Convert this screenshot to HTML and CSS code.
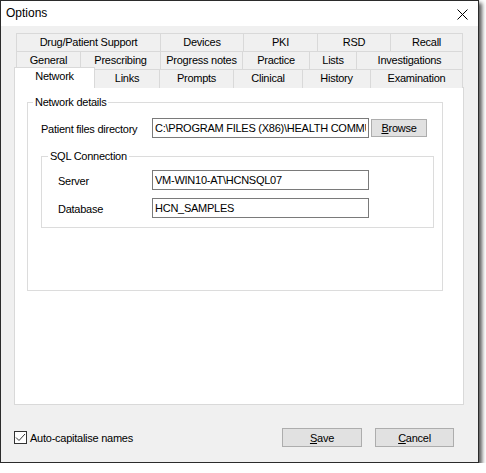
FILE: index.html
```html
<!DOCTYPE html>
<html>
	<head>
		<meta charset="UTF-8">
		<title>Options</title>
		<link rel="stylesheet" href="styles.css">
	</head>
	<body>
		<div class="window">
			<div class="titlebar">
				<span class="title">Options</span>
				<svg class="close" width="11" height="11" viewBox="0 0 11 11">
					<path d="M0.5 0.5 L10.5 10.5 M10.5 0.5 L0.5 10.5" stroke="#000" stroke-width="1" fill="none"/>
				</svg>
			</div>
			<div class="win_body">
				<div class="tabctl">
					<div class="tabrow">
						<div class="tab t_drug">Drug/Patient Support</div>
						<div class="tab t_devices">Devices</div>
						<div class="tab t_pki">PKI</div>
						<div class="tab t_rsd">RSD</div>
						<div class="tab t_recall">Recall</div>
					</div>
					<div class="tabrow">
						<div class="tab t_general">General</div>
						<div class="tab t_prescribing">Prescribing</div>
						<div class="tab t_progress">Progress notes</div>
						<div class="tab t_practice">Practice</div>
						<div class="tab t_lists">Lists</div>
						<div class="tab t_invest">Investigations</div>
					</div>
					<div class="tabrow">
						<div class="tab tab_sel t_network">Network</div>
						<div class="tab t_links">Links</div>
						<div class="tab t_prompts">Prompts</div>
						<div class="tab t_clinical">Clinical</div>
						<div class="tab t_history">History</div>
						<div class="tab t_exam">Examination</div>
					</div>
					<div class="panel">
						<fieldset class="group net_group">
							<legend>Network details</legend>
							<div class="field">
								<label class="lbl_dir">Patient files directory</label>
								<input class="txt" type="text" value="C:\PROGRAM FILES (X86)\HEALTH COMMUNICATION NETWORK\PATIENT FILES">
								<button class="btn btn_browse"><u>B</u>rowse</button>
							</div>
							<fieldset class="group sql_group">
								<legend>SQL Connection</legend>
								<div class="field">
									<label class="lbl_sql">Server</label>
									<input class="txt" type="text" value="VM-WIN10-AT\HCNSQL07">
								</div>
								<div class="field field_gap">
									<label class="lbl_sql">Database</label>
									<input class="txt" type="text" value="HCN_SAMPLES">
								</div>
							</fieldset>
						</fieldset>
					</div>
				</div>
				<div class="footer">
					<span class="check">
						<svg width="11" height="11" viewBox="0 0 11 11">
							<polyline points="1,5.5 4,8.5 10,2" stroke="#333" stroke-width="1" fill="none"/>
						</svg>
					</span>
					<span class="check_lbl">Auto-capitalise names</span>
					<button class="btn btn_save"><u>S</u>ave</button>
					<button class="btn btn_cancel"><u>C</u>ancel</button>
				</div>
			</div>
		</div>
	</body>
</html>
```

FILE: styles.css
```css
html,body{margin: 0; padding: 0; background: #fff;}
body{
	font-family: "Liberation Sans", Arial, sans-serif;
	font-size: 11px;
	letter-spacing: -0.25px;
	color: #000;
}
.window{
	box-sizing: border-box;
	width: 479px;
	height: 463px;
	border: 1px solid #2b2b2b;
	box-shadow: 3px 3px 4px rgba(0,0,0,0.65);
	display: flex;
	flex-direction: column;
}
.titlebar{
	height: 25px;
	background: #fff;
	display: flex;
	align-items: center;
	padding: 0 10px 0 5px;
}
.title{
	font-size: 12px;
	letter-spacing: 0;
	flex: 1;
	margin-top: -1px;
}
.close{
	margin-top: 2px;
}
.win_body{
	flex: 1;
	background: #f0f0f0;
	padding: 7px 0 0 13px;
}

/* tabs */
.tabctl{
	width: 450px;
}
.tabrow{
	display: flex;
	height: 18px;
	padding-left: 2px;
}
.tab{
	box-sizing: border-box;
	height: 19px;
	border: 1px solid #d9d9d9;
	border-bottom: none;
	margin-left: -1px;
	background: #f0f0f0;
	text-align: center;
	line-height: 17px;
	white-space: nowrap;
}
.tabrow .tab:first-child{
	margin-left: 0;
}
.tab_sel{
	position: relative;
	z-index: 1;
	background: #fff;
	height: 21px;
	margin-top: -2px;
	line-height: 17px;
}
.tabrow .tab_sel:first-child{
	margin-left: -2px;
}
.t_drug{width: 145px;}
.t_devices{width: 84px;}
.t_pki{width: 75px;}
.t_rsd{width: 74px;}
.t_recall{width: 73px;}
.t_general{width: 65px;}
.t_prescribing{width: 81px;}
.t_progress{width: 83px;}
.t_practice{width: 68px;}
.t_lists{width: 48px;}
.t_invest{width: 107px;}
.t_network{width: 81px;}
.t_links{width: 66px;}
.t_prompts{width: 75px;}
.t_clinical{width: 70px;}
.t_history{width: 69px;}
.t_exam{width: 93px;}

.panel{
	box-sizing: border-box;
	height: 318px;
	border: 1px solid #d9d9d9;
	background: #fff;
	padding: 8px 20px 0 12px;
}

/* group boxes */
.group{
	box-sizing: border-box;
	margin: 0;
	border: 1px solid #dcdcdc;
	min-width: 0;
}
.group legend{
	padding: 0 2px;
	line-height: 13px;
}
.net_group{
	height: 195px;
	padding: 9px 8px 0 13px;
}
.net_group > legend{
	margin-left: -8px;
}
.sql_group{
	margin-top: 12px;
	padding: 7px 0 9px 16px;
}
.sql_group > legend{
	margin-left: -10px;
}
.field{
	display: flex;
	align-items: center;
	height: 20px;
}
.field_gap{
	margin-top: 8px;
}
.lbl_dir{
	width: 111px;
	padding-top: 2px;
}
.lbl_sql{
	width: 94px;
	padding-top: 2px;
}
.txt{
	box-sizing: border-box;
	width: 217px;
	height: 20px;
	margin: 0;
	border: 1px solid #7a7a7a;
	padding: 0 2px;
	font-family: inherit;
	font-size: 11px;
	letter-spacing: -0.25px;
	color: #000;
	background: #fff;
	outline: none;
}
.btn{
	box-sizing: border-box;
	margin: 0;
	padding: 0;
	background: #e1e1e1;
	border: 1px solid #adadad;
	font-family: inherit;
	font-size: 11px;
	letter-spacing: -0.25px;
	color: #000;
}
.btn_browse{
	width: 56px;
	height: 18px;
	margin-left: 2px;
}

/* footer */
.footer{
	display: flex;
	align-items: center;
	margin-top: 23px;
	padding-right: 24px;
	height: 19px;
}
.check{
	box-sizing: border-box;
	width: 13px;
	height: 13px;
	border: 1px solid #333;
	background: #fff;
	display: flex;
}
.check_lbl{
	margin-left: 3px;
	flex: 1;
}
.btn_save{
	width: 80px;
	height: 19px;
}
.btn_cancel{
	width: 79px;
	height: 19px;
	margin-left: 13px;
}
```
